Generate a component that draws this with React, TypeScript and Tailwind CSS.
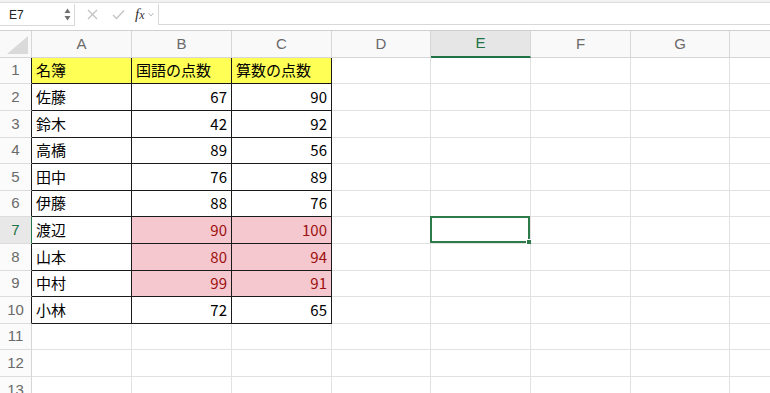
import React from 'react';

const COLS = [
  { key: 'A', w: 'w-[100px]' },
  { key: 'B', w: 'w-[100px]' },
  { key: 'C', w: 'w-[100px]' },
  { key: 'D', w: 'w-[99px]' },
  { key: 'E', w: 'w-[100px]' },
  { key: 'F', w: 'w-[100px]' },
  { key: 'G', w: 'w-[99px]' },
];

type Row = {
  n: number;
  h: string;
  cells?: [string, string, string];
  kind?: 'head' | 'hot' | 'plain';
};

const ROWS: Row[] = [
  { n: 1, h: 'h-[26px]', cells: ['名簿', '国語の点数', '算数の点数'], kind: 'head' },
  { n: 2, h: 'h-[27px]', cells: ['佐藤', '67', '90'], kind: 'plain' },
  { n: 3, h: 'h-[27px]', cells: ['鈴木', '42', '92'], kind: 'plain' },
  { n: 4, h: 'h-[26px]', cells: ['高橋', '89', '56'], kind: 'plain' },
  { n: 5, h: 'h-[27px]', cells: ['田中', '76', '89'], kind: 'plain' },
  { n: 6, h: 'h-[26px]', cells: ['伊藤', '88', '76'], kind: 'plain' },
  { n: 7, h: 'h-[27px]', cells: ['渡辺', '90', '100'], kind: 'hot' },
  { n: 8, h: 'h-[27px]', cells: ['山本', '80', '94'], kind: 'hot' },
  { n: 9, h: 'h-[26px]', cells: ['中村', '99', '91'], kind: 'hot' },
  { n: 10, h: 'h-[27px]', cells: ['小林', '72', '65'], kind: 'plain' },
  { n: 11, h: 'h-[26px]' },
  { n: 12, h: 'h-[27px]' },
  { n: 13, h: 'h-[27px]' },
];

const cellFont = "font-['Noto_Sans_CJK_JP',sans-serif]";
const headFont = "font-['Liberation_Sans',Arial,sans-serif]";

function FormulaBar() {
  return (
    <div className="h-[30px] flex flex-col bg-white">
      <div className="h-[3px] bg-[#f2f2f2] border-b border-[#dedede]" />
      <div className="flex-1 flex items-start">
        <div className="w-[75px] h-[22px] mt-[1px] border-r border-b border-[#d8d8d8] flex items-center justify-between pl-[9px] pr-[3px]">
          <span className={`${headFont} text-[12px] text-[#222]`}>E7</span>
          <svg width="7" height="13" viewBox="0 0 7 13">
            <path d="M3.5 0.5 L6.5 5 L0.5 5 Z M3.5 12.5 L6.5 8 L0.5 8 Z" fill="#707070" />
          </svg>
        </div>
        <div className="flex items-center h-[22px] pl-[12px] gap-[14px]">
          <svg width="11" height="11" viewBox="0 0 11 11">
            <path d="M1 1 L10 10 M10 1 L1 10" stroke="#c4c4c4" strokeWidth="1.4" />
          </svg>
          <svg width="13" height="11" viewBox="0 0 13 11">
            <path d="M1 6 L4.5 9.5 L12 1.5" stroke="#c4c4c4" strokeWidth="1.4" fill="none" />
          </svg>
        </div>
        <div className="flex items-center h-[22px] pl-[10px] gap-[3px]">
          <span className="font-['Liberation_Serif',serif] italic text-[15px] text-[#333] leading-none">
            f<span className="text-[12px]">x</span>
          </span>
          <svg width="6" height="5" viewBox="0 0 6 5">
            <path d="M0.5 1 L3 4 L5.5 1" stroke="#bbb" strokeWidth="1" fill="none" />
          </svg>
        </div>
        <div className="flex-1 h-[21px] mt-[1px] ml-[4px] border-l border-b border-[#d8d8d8]" />
      </div>
    </div>
  );
}

function HeaderRow() {
  return (
    <div className="flex h-[28px] border-t border-[#d0d0d0] bg-[#f9f9f9]">
      <div className="w-[32px] shrink-0 border-r border-b border-[#d6d6d6] flex items-end justify-end p-[2px]">
        <svg width="24" height="20" viewBox="0 0 24 20">
          <path d="M23 1 L23 19 L2 19 Z" fill="#dadada" />
        </svg>
      </div>
      {COLS.map((c) => {
        const sel = c.key === 'E';
        return (
          <div
            key={c.key}
            className={`${c.w} shrink-0 flex items-center justify-center ${headFont} text-[15px] ${
              sel
                ? 'bg-[#e6e6e6] text-[#217346] border-r border-[#d6d6d6] border-b-2 border-b-[#217346]'
                : 'text-[#6a6a6a] border-r border-b border-[#d6d6d6]'
            }`}
          >
            {c.key}
          </div>
        );
      })}
      <div className="flex-1 border-b border-[#d6d6d6]" />
    </div>
  );
}

function DataRow({ row }: { row: Row }) {
  const inTable = !!row.cells;
  const sel = row.n === 7;
  const rowHeadBorder = sel
    ? 'border-r-[#217346]'
    : inTable
      ? 'border-r-[#1a1a1a]'
      : 'border-r-[#d6d6d6]';
  return (
    <div className={`flex ${row.h}`}>
      <div
        className={`w-[32px] shrink-0 flex items-center justify-center ${headFont} text-[15px] border-r border-b border-b-[#dcdcdc] ${rowHeadBorder} ${
          sel ? 'bg-[#e8e8e8] text-[#217346]' : 'bg-[#fbfbfb] text-[#6a6a6a]'
        }`}
      >
        {row.n}
      </div>
      {COLS.map((c, i) => {
        const tableCell = inTable && i < 3;
        let bg = 'bg-white';
        let color = 'text-black';
        if (tableCell && row.kind === 'head') bg = 'bg-[#ffff55]';
        if (tableCell && row.kind === 'hot' && i > 0) {
          bg = 'bg-[#f5c7ce]';
          color = 'text-[#9c1010]';
        }
        const border = tableCell
          ? 'border-r border-b border-[#1a1a1a]'
          : 'border-r border-b border-[#e1e1e1]';
        const align =
          tableCell && row.kind !== 'head' && i > 0 ? 'justify-end pr-[4px]' : 'justify-start pl-[4px]';
        const active = sel && c.key === 'E';
        return (
          <div
            key={c.key}
            className={`${c.w} shrink-0 relative flex items-center ${align} ${bg} ${border} ${cellFont} text-[15px] ${color}`}
          >
            {tableCell ? row.cells![i] : null}
            {active && (
              <div className="absolute -left-[1px] -top-[1px] right-0 bottom-0 border-2 border-[#2e7a4b]">
                <div className="absolute -right-[4px] -bottom-[4px] w-[6px] h-[6px] bg-[#2e7a4b] border border-white" />
              </div>
            )}
          </div>
        );
      })}
      <div className="flex-1 border-b border-[#e1e1e1]" />
    </div>
  );
}

export default function App() {
  return (
    <div className="w-[770px] h-[393px] overflow-hidden bg-white">
      <FormulaBar />
      <HeaderRow />
      {ROWS.map((r) => (
        <DataRow key={r.n} row={r} />
      ))}
    </div>
  );
}
